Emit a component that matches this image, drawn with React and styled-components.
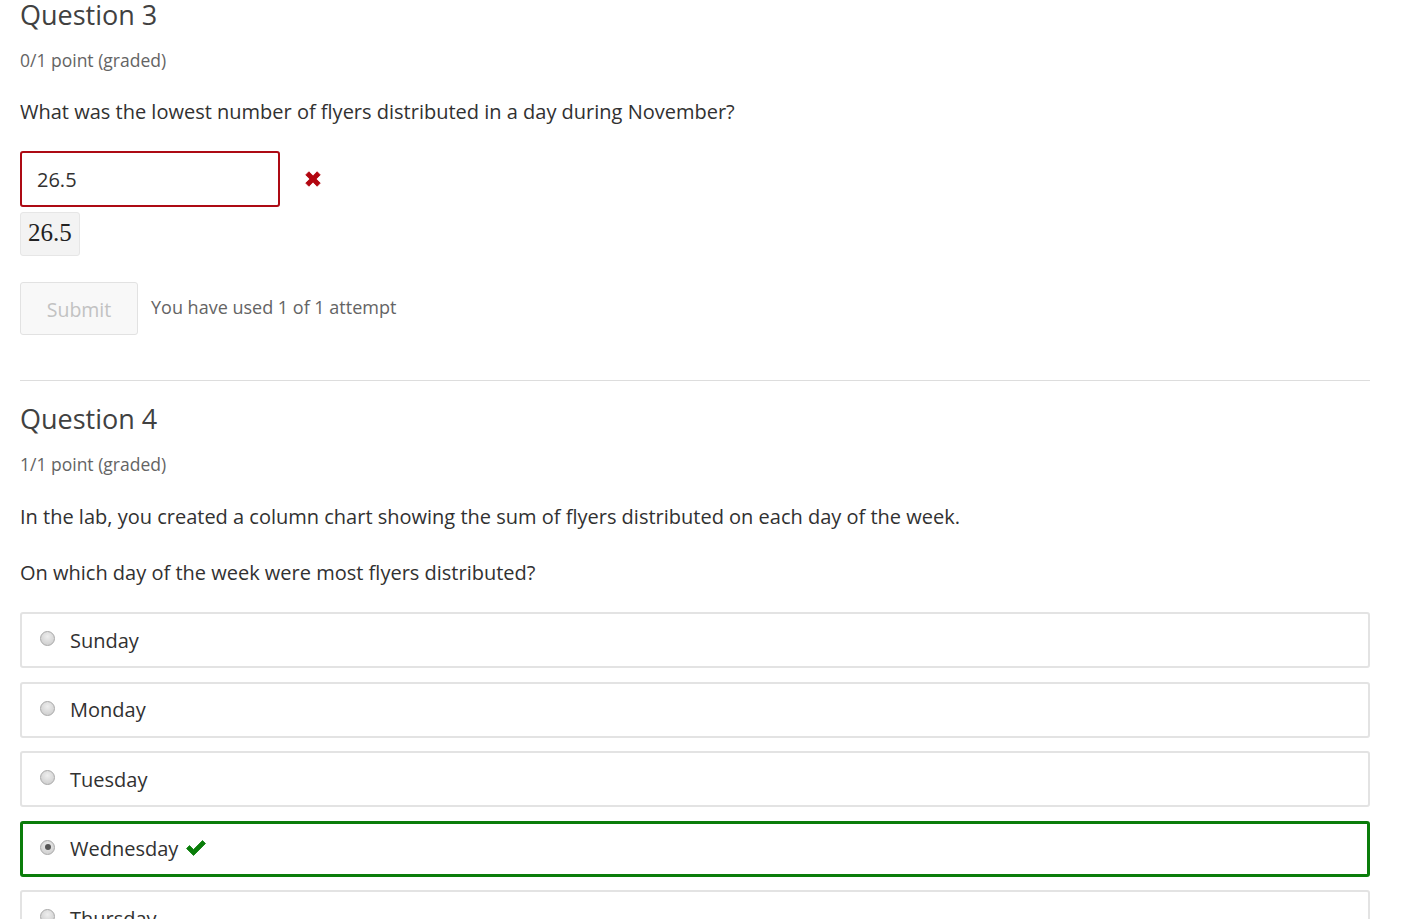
import React from "react";
import styled, { createGlobalStyle } from "styled-components";

const GlobalStyle = createGlobalStyle`
  html, body {
    margin: 0;
    padding: 0;
    background: #fff;
    overflow: hidden;
  }
  body {
    font-family: "Open Sans", "Liberation Sans", sans-serif;
    color: #313131;
  }
`;

const Page = styled.div`
  width: 1350px;
  padding: 0 0 0 20px;
`;

const Problem = styled.section`
  padding-bottom: ${({ last }) => (last ? "0" : "45px")};
  border-bottom: ${({ last }) => (last ? "none" : "1px solid #ddd")};
  margin-bottom: 23px;
`;

const Title = styled.h3`
  margin: 0;
  font-size: 27px;
  font-weight: 400;
  line-height: 30px;
  color: #414141;
`;

const Points = styled.div`
  margin-top: 18px;
  font-size: 17.5px;
  line-height: 24px;
  color: #646464;
`;

const Prompt = styled.p`
  margin: ${({ gap }) => gap || 26}px 0 0;
  font-size: 20px;
  line-height: 28px;
  color: #313131;
`;

const AnswerRow = styled.div`
  display: flex;
  align-items: center;
  margin-top: 25px;
  gap: 23px;
`;

const TextInput = styled.div`
  box-sizing: border-box;
  width: 260px;
  height: 56px;
  border: 2px solid #ad0a14;
  border-radius: 3px;
  padding: 0 15px;
  display: flex;
  align-items: center;
  font-size: 20px;
  color: #313131;
`;

const MathBox = styled.div`
  display: inline-block;
  margin-top: 5px;
  padding: 5px 7px 7px;
  background: #f3f3f3;
  border: 1px solid #e6e6e6;
  border-radius: 3px;
  font-family: "Liberation Serif", "DejaVu Serif", serif;
  font-size: 25px;
  line-height: 30px;
  color: #222;
`;

const ActionRow = styled.div`
  display: flex;
  align-items: center;
  gap: 13px;
  margin-top: 26px;
`;

const SubmitButton = styled.button`
  box-sizing: border-box;
  width: 118px;
  height: 53px;
  border: 1px solid #e2e2e2;
  border-radius: 3px;
  background: #f8f8f8;
  color: #c2c2c2;
  font-family: inherit;
  font-size: 19.5px;
  padding-top: 2px;
`;

const Attempts = styled.span`
  font-size: 18px;
  color: #646464;
  margin-top: -4px;
`;

const Options = styled.div`
  display: flex;
  flex-direction: column;
  gap: 13.5px;
  margin-top: 25px;
`;

const Option = styled.label`
  box-sizing: border-box;
  height: 56px;
  display: flex;
  align-items: center;
  border: ${({ correct }) => (correct ? "3px solid #0a7d0a" : "2px solid #e3e3e3")};
  padding-left: ${({ correct }) => (correct ? "17px" : "18px")};
  border-radius: 3px;
  font-size: 20px;
  color: #313131;
`;

const Radio = styled.span`
  box-sizing: border-box;
  width: 15px;
  height: 15px;
  border-radius: 50%;
  border: 1px solid #a8a8a8;
  background: radial-gradient(circle at 50% 35%, #eeeeee, #c8c8c8);
  margin-right: 15px;
  margin-top: -3px;
  position: relative;
  flex-shrink: 0;

  &::after {
    content: "";
    display: ${({ checked }) => (checked ? "block" : "none")};
    position: absolute;
    left: 3.5px;
    top: 3.5px;
    width: 6px;
    height: 6px;
    border-radius: 50%;
    background: #555;
  }
`;

const CrossIcon = () => (
  <svg width="20" height="20" viewBox="0 0 18 18">
    <path
      d="M2.5 5.3 L5.3 2.5 L9 6.2 L12.7 2.5 L15.5 5.3 L11.8 9 L15.5 12.7 L12.7 15.5 L9 11.8 L5.3 15.5 L2.5 12.7 L6.2 9 Z"
      fill="#b20610"
      stroke="#b20610"
      strokeWidth="0.8"
      strokeLinejoin="round"
    />
  </svg>
);

const CheckIcon = () => (
  <svg width="22" height="18" viewBox="0 0 22 18" style={{ marginLeft: 7, marginTop: -2 }}>
    <path
      d="M1.5 9.5 L4.5 6.5 L8.5 10.5 L17.5 1.5 L20.5 4.5 L8.5 16.5 Z"
      fill="#0a7d0a"
      stroke="#0a7d0a"
      strokeWidth="0.8"
      strokeLinejoin="round"
    />
  </svg>
);

const days = [
  { label: "Sunday" },
  { label: "Monday" },
  { label: "Tuesday" },
  { label: "Wednesday", checked: true },
  { label: "Thursday" },
  { label: "Friday" },
];

export default function App() {
  return (
    <>
      <GlobalStyle />
      <Page>
        <Problem>
          <Title>Question 3</Title>
          <Points>0/1 point (graded)</Points>
          <Prompt>
            What was the lowest number of flyers distributed in a day during November?
          </Prompt>
          <AnswerRow>
            <TextInput>26.5</TextInput>
            <CrossIcon />
          </AnswerRow>
          <MathBox>26.5</MathBox>
          <ActionRow>
            <SubmitButton disabled>Submit</SubmitButton>
            <Attempts>You have used 1 of 1 attempt</Attempts>
          </ActionRow>
        </Problem>
        <Problem last>
          <Title>Question 4</Title>
          <Points>1/1 point (graded)</Points>
          <Prompt gap={27}>
            In the lab, you created a column chart showing the sum of flyers distributed on each day of the week.
          </Prompt>
          <Prompt gap={28}>On which day of the week were most flyers distributed?</Prompt>
          <Options>
            {days.map((d) => (
              <Option key={d.label} correct={d.checked}>
                <Radio checked={d.checked} />
                {d.label}
                {d.checked && <CheckIcon />}
              </Option>
            ))}
          </Options>
        </Problem>
      </Page>
    </>
  );
}
